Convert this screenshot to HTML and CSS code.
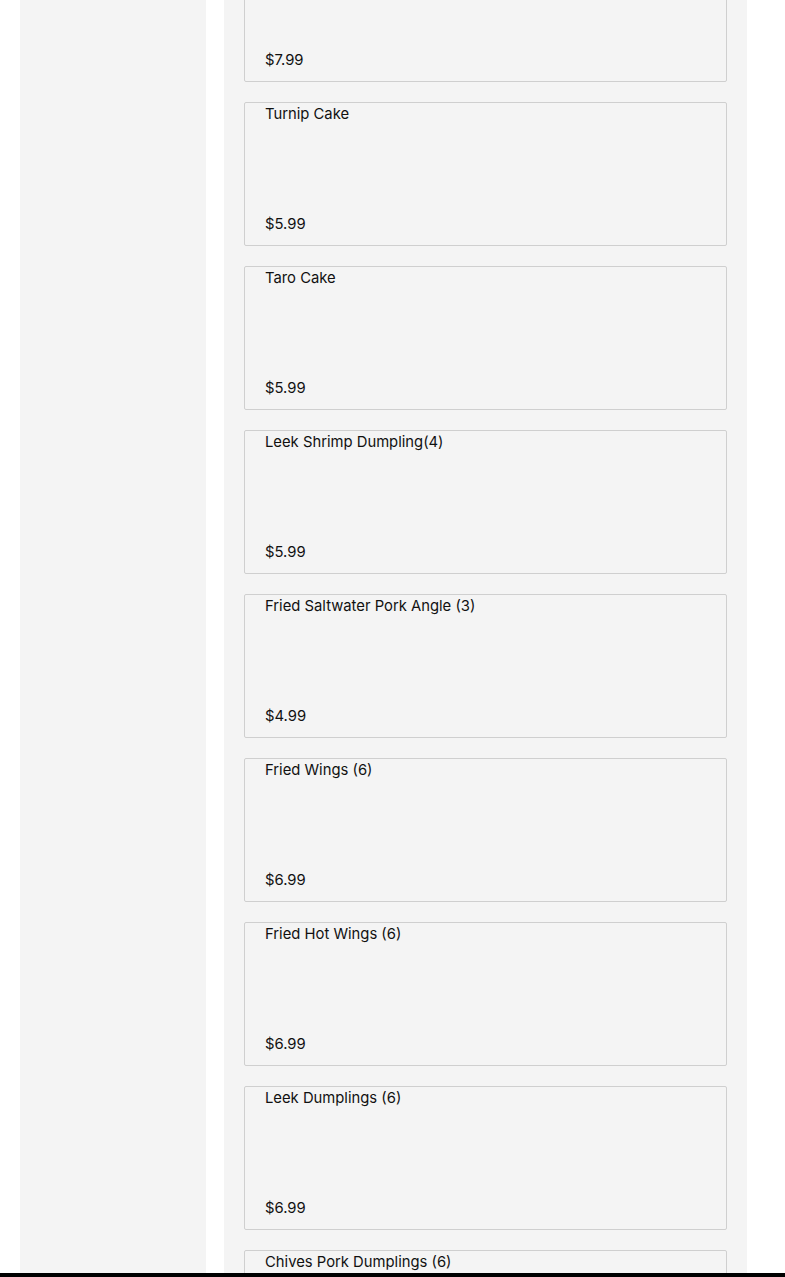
FILE: index.html
```html
<!DOCTYPE html>
<html>
<head>
<meta charset="utf-8">
<link rel="stylesheet" href="styles.css">
</head>
<body>
<div class="page">
  <aside class="sidebar"></aside>
  <main class="menu">
    <div class="list">
      <div class="card"><div class="name"></div><div class="price">$7.99</div></div>
      <div class="card"><div class="name">Turnip Cake</div><div class="price">$5.99</div></div>
      <div class="card"><div class="name">Taro Cake</div><div class="price">$5.99</div></div>
      <div class="card"><div class="name">Leek Shrimp Dumpling(4)</div><div class="price">$5.99</div></div>
      <div class="card"><div class="name">Fried Saltwater Pork Angle (3)</div><div class="price">$4.99</div></div>
      <div class="card"><div class="name">Fried Wings (6)</div><div class="price">$6.99</div></div>
      <div class="card"><div class="name">Fried Hot Wings (6)</div><div class="price">$6.99</div></div>
      <div class="card"><div class="name">Leek Dumplings (6)</div><div class="price">$6.99</div></div>
      <div class="card"><div class="name">Chives Pork Dumplings (6)</div><div class="price">$6.99</div></div>
    </div>
  </main>
</div>
<div class="footer-bar"></div>
</body>
</html>
```
FILE: styles.css
```css
html, body {
  margin: 0;
  padding: 0;
  background: #ffffff;
  height: 1277px;
  overflow: hidden;
}
body {
  font-family: "Inter", "Open Sans", "Liberation Sans", sans-serif;
  color: #111;
}
.page {
  display: flex;
  padding-left: 20px;
  gap: 18px;
  height: 1277px;
}
.sidebar {
  width: 186px;
  background: #f4f4f4;
  flex: none;
}
.menu {
  width: 523px;
  background: #f4f4f4;
  flex: none;
  padding: 0 20px;
  box-sizing: border-box;
}
.list {
  display: flex;
  flex-direction: column;
  gap: 20px;
  margin-top: -62px;
}
.card {
  height: 144px;
  box-sizing: border-box;
  border: 1px solid #cfcfcf;
  border-radius: 2px;
  padding: 1px 20px 11px;
  display: flex;
  flex-direction: column;
  justify-content: space-between;
  font-size: 14.8px;
  line-height: 20px;
}
.footer-bar {
  position: fixed;
  left: 0;
  right: 0;
  bottom: 0;
  height: 4px;
  background: #000;
}
```
